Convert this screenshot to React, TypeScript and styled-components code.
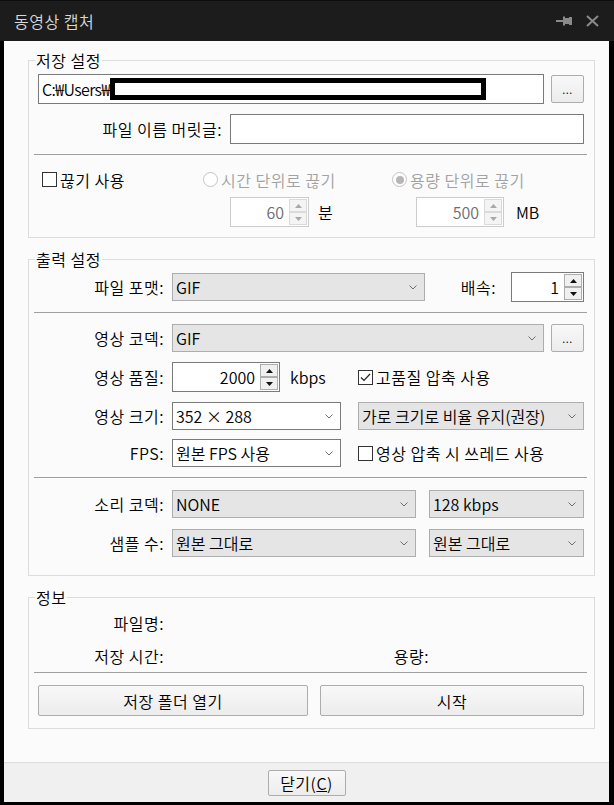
import React from 'react';
import styled, { createGlobalStyle } from 'styled-components';

const GlobalStyle = createGlobalStyle`
  html, body {
    margin: 0;
    padding: 0;
    background: #000;
  }
  * {
    box-sizing: border-box;
  }
`;

const Window = styled.div`
  width: 614px;
  height: 805px;
  display: flex;
  flex-direction: column;
  overflow: hidden;
  background: #000;
  font-family: 'Noto Sans CJK KR', 'Noto Sans', sans-serif;
  font-size: 16px;
  font-weight: 350;
  color: #000;
`;

const TitleBar = styled.div`
  height: 41px;
  flex-shrink: 0;
  display: flex;
  align-items: center;
  padding: 0 15px 0 14px;
  background: #1c1c1c;
  border-top: 1px solid #0d0d0d;
  color: #d8d8d8;
  font-size: 16px;
  letter-spacing: 0.5px;
`;

const TitleActions = styled.div`
  margin-left: auto;
  display: flex;
  align-items: center;
  gap: 14px;
`;

const Body = styled.div`
  flex: 1;
  display: flex;
  flex-direction: column;
  margin: 0 5px 3px 4px;
  background: #fbfbfb;
`;

const Content = styled.div`
  flex: 1;
  display: flex;
  flex-direction: column;
  gap: 12px;
  padding: 10px 14px 0 24px;
`;

const Group = styled.fieldset`
  margin: 0;
  padding: 0;
  min-width: 0;
  border: 1px solid #dcdcdc;
`;

const GroupTitle = styled.legend`
  margin-left: 6px;
  padding: 0 1px;
  font-size: 16px;
  line-height: 18px;
  letter-spacing: 0.5px;
`;

const GroupBody = styled.div<{ $pt: number; $pb: number }>`
  display: flex;
  flex-direction: column;
  padding: ${p => p.$pt}px 10px ${p => p.$pb}px 9px;
`;

const Row = styled.div<{ $mt?: number; $h?: number }>`
  display: flex;
  align-items: center;
  flex-shrink: 0;
  height: ${p => p.$h ?? 30}px;
  margin-top: ${p => p.$mt ?? 0}px;
`;

const Cell = styled.div<{ $w?: number; $pl?: number }>`
  display: flex;
  align-items: center;
  height: 100%;
  ${p => (p.$w ? `width: ${p.$w}px; flex-shrink: 0;` : 'flex: 1;')}
  padding-left: ${p => p.$pl ?? 0}px;
`;

const Label = styled.span<{ $w?: number }>`
  width: ${p => p.$w ?? 126}px;
  flex-shrink: 0;
  margin-right: 8px;
  text-align: right;
  white-space: nowrap;
  letter-spacing: 0.5px;
`;

const SideLabel = styled.span`
  margin-left: auto;
  margin-right: 15px;
  white-space: nowrap;
  letter-spacing: 0.5px;
`;

const Divider = styled.div<{ $mt: number }>`
  height: 1px;
  flex-shrink: 0;
  background: #a0a0a0;
  margin: ${p => p.$mt}px -3px 0 -4px;
`;

const TextBox = styled.div`
  flex: 1;
  height: 30px;
  display: flex;
  align-items: center;
  padding-left: 3px;
  border: 1px solid #7a7a7a;
  background: #fff;
  white-space: nowrap;
  overflow: hidden;
`;

const PathText = styled.span`
  letter-spacing: -0.6px;
`;

const Redacted = styled.span`
  display: inline-block;
  flex-shrink: 0;
  width: 376px;
  height: 22px;
  border: 5px solid #000;
  background: #fff;
`;

const Select = styled.div<{ $w?: number; $white?: boolean }>`
  height: 28px;
  display: flex;
  align-items: center;
  ${p => (p.$w ? `width: ${p.$w}px; flex-shrink: 0;` : 'flex: 1;')}
  padding: 0 7px 0 3px;
  border: 1px solid ${p => (p.$white ? '#7a7a7a' : '#adadad')};
  background: ${p => (p.$white ? '#fff' : '#e5e5e5')};
  white-space: nowrap;
`;

const SelectText = styled.span`
  flex: 1;
  overflow: hidden;
`;

const Spin = styled.div<{ $w: number; $disabled?: boolean }>`
  width: ${p => p.$w}px;
  height: 30px;
  flex-shrink: 0;
  display: flex;
  border: 1px solid ${p => (p.$disabled ? '#cccccc' : '#7a7a7a')};
  background: #fff;
  color: ${p => (p.$disabled ? '#6d6d6d' : '#000')};
`;

const SpinValue = styled.span`
  flex: 1;
  display: flex;
  align-items: center;
  justify-content: flex-end;
  padding-right: 5px;
`;

const SpinArrows = styled.div`
  width: 18px;
  display: flex;
  flex-direction: column;
  margin: 1px 1px 1px 0;
`;

const SpinButton = styled.div<{ $disabled?: boolean }>`
  flex: 1;
  display: flex;
  align-items: center;
  justify-content: center;
  border: 1px solid ${p => (p.$disabled ? '#dadada' : '#adadad')};
  background: ${p => (p.$disabled ? '#f4f4f4' : '#f0f0f0')};
`;

const Unit = styled.span<{ $ml: number }>`
  margin-left: ${p => p.$ml}px;
  white-space: nowrap;
`;

const Option = styled.span<{ $disabled?: boolean }>`
  display: flex;
  align-items: center;
  gap: 3px;
  white-space: nowrap;
  letter-spacing: 0.5px;
  color: ${p => (p.$disabled ? '#a2a2a2' : '#000')};
`;

const CheckBox = styled.span`
  width: 15px;
  height: 15px;
  flex-shrink: 0;
  display: inline-flex;
  align-items: center;
  justify-content: center;
  border: 1px solid #333;
  background: #fff;
`;

const Radio = styled.span<{ $checked?: boolean }>`
  width: 15px;
  height: 15px;
  flex-shrink: 0;
  display: inline-flex;
  align-items: center;
  justify-content: center;
  border: 1px solid #c4c4c4;
  border-radius: 50%;
  background: #fff;

  &::after {
    content: '';
    display: ${p => (p.$checked ? 'block' : 'none')};
    width: 8px;
    height: 8px;
    border-radius: 50%;
    background: #b6b6b6;
  }
`;

const PushButton = styled.button<{ $w?: number; $h: number; $dots?: boolean }>`
  ${p => (p.$w ? `width: ${p.$w}px; flex-shrink: 0;` : '')}
  height: ${p => p.$h}px;
  display: flex;
  align-items: ${p => (p.$dots ? 'flex-end' : 'center')};
  justify-content: center;
  padding: 0 0 ${p => (p.$dots ? 7 : 0)}px;
  margin: 0;
  border: 1px solid #adadad;
  border-radius: 2px;
  background: linear-gradient(#f8f8f8, #ececec);
  font-family: inherit;
  font-weight: inherit;
  font-size: ${p => (p.$dots ? 11 : 16)}px;
  letter-spacing: 0.5px;
  line-height: 1;
  color: #000;
`;

const InfoRow = styled.div<{ $mt: number }>`
  display: grid;
  grid-template-columns: 126px 123px 126px 1fr;
  column-gap: 8px;
  align-items: center;
  height: 26px;
  margin-top: ${p => p.$mt}px;
`;

const InfoLabel = styled.span`
  text-align: right;
  white-space: nowrap;
  letter-spacing: 0.5px;
`;

const ButtonRow = styled.div`
  display: grid;
  grid-template-columns: 270px 1fr;
  column-gap: 12px;
  height: 31px;
  margin-top: 12px;
`;

const Footer = styled.div`
  height: 40px;
  flex-shrink: 0;
  display: flex;
  align-items: center;
  justify-content: center;
  border-top: 1px solid #dcdcdc;
  background: #f0f0f0;
`;

const Chevron = () => (
  <svg width="8" height="5" viewBox="0 0 8 5">
    <polyline points="0.5,0.5 4,4 7.5,0.5" fill="none" stroke="#6e6e6e" strokeWidth="1" />
  </svg>
);

const Triangle = ({ down, color }: { down?: boolean; color: string }) => (
  <svg width="7" height="4" viewBox="0 0 7 4">
    <polygon points={down ? '0,0 7,0 3.5,4' : '0,4 7,4 3.5,0'} fill={color} />
  </svg>
);

const Dropdown = ({ value, w, white }: { value: string; w?: number; white?: boolean }) => (
  <Select $w={w} $white={white}>
    <SelectText>{value}</SelectText>
    <Chevron />
  </Select>
);

const SpinBox = ({ value, w, disabled }: { value: string; w: number; disabled?: boolean }) => {
  const c = disabled ? '#a8a8a8' : '#111';
  return (
    <Spin $w={w} $disabled={disabled}>
      <SpinValue>{value}</SpinValue>
      <SpinArrows>
        <SpinButton $disabled={disabled}>
          <Triangle color={c} />
        </SpinButton>
        <SpinButton $disabled={disabled}>
          <Triangle down color={c} />
        </SpinButton>
      </SpinArrows>
    </Spin>
  );
};

const Check = ({ checked }: { checked?: boolean }) => (
  <CheckBox>
    {checked && (
      <svg width="11" height="9" viewBox="0 0 11 9">
        <polyline points="1,4.5 4,7.5 10,1" fill="none" stroke="#222" strokeWidth="1.2" />
      </svg>
    )}
  </CheckBox>
);

const PinIcon = () => (
  <svg width="16" height="10" viewBox="0 0 16 10">
    <g fill="#8a8a8a">
      <rect x="0" y="4" width="7" height="2" />
      <rect x="7" y="0.5" width="2" height="9" />
      <rect x="9" y="2" width="5" height="6" />
      <rect x="13" y="1" width="3" height="8" />
    </g>
  </svg>
);

const CloseIcon = () => (
  <svg width="13" height="12" viewBox="0 0 13 12">
    <path d="M1 1 L12 11 M12 1 L1 11" stroke="#8a8a8a" strokeWidth="2" />
  </svg>
);

const App: React.FC = () => {
  return (
    <>
      <GlobalStyle />
      <Window>
        <TitleBar>
          <span>동영상 캡처</span>
          <TitleActions>
            <PinIcon />
            <CloseIcon />
          </TitleActions>
        </TitleBar>

        <Body>
          <Content>
            <Group>
              <GroupTitle>저장 설정</GroupTitle>
              <GroupBody $pt={5} $pb={10}>
                <Row>
                  <TextBox>
                    <PathText>C:₩Users₩</PathText>
                    <Redacted />
                  </TextBox>
                  <PushButton $w={33} $h={28} $dots style={{ marginLeft: 7 }}>
                    ...
                  </PushButton>
                </Row>
                <Row $mt={10}>
                  <Label $w={184}>파일 이름 머릿글:</Label>
                  <TextBox />
                </Row>
                <Divider $mt={10} />
                <Row $mt={11} $h={27}>
                  <Cell $w={151} $pl={4}>
                    <Option>
                      <Check />
                      끊기 사용
                    </Option>
                  </Cell>
                  <Cell $w={196} $pl={14}>
                    <Option $disabled>
                      <Radio />
                      시간 단위로 끊기
                    </Option>
                  </Cell>
                  <Cell $pl={7}>
                    <Option $disabled>
                      <Radio $checked />
                      용량 단위로 끊기
                    </Option>
                  </Cell>
                </Row>
                <Row $mt={4}>
                  <Cell $w={151} />
                  <Cell $w={196} $pl={41}>
                    <SpinBox value="60" w={79} disabled />
                    <Unit $ml={9}>분</Unit>
                  </Cell>
                  <Cell $pl={31}>
                    <SpinBox value="500" w={88} disabled />
                    <Unit $ml={12}>MB</Unit>
                  </Cell>
                </Row>
              </GroupBody>
            </Group>

            <Group>
              <GroupTitle>출력 설정</GroupTitle>
              <GroupBody $pt={4} $pb={17}>
                <Row>
                  <Label>파일 포맷:</Label>
                  <Dropdown value="GIF" w={253} />
                  <SideLabel>배속:</SideLabel>
                  <SpinBox value="1" w={73} />
                </Row>
                <Divider $mt={10} />
                <Row $mt={10}>
                  <Label>영상 코덱:</Label>
                  <Dropdown value="GIF" />
                  <PushButton $w={33} $h={28} $dots style={{ marginLeft: 7 }}>
                    ...
                  </PushButton>
                </Row>
                <Row $mt={9}>
                  <Label>영상 품질:</Label>
                  <Cell $w={169}>
                    <SpinBox value="2000" w={108} />
                    <Unit $ml={10}>kbps</Unit>
                  </Cell>
                  <Cell $pl={17}>
                    <Option>
                      <Check checked />
                      고품질 압축 사용
                    </Option>
                  </Cell>
                </Row>
                <Row $mt={9}>
                  <Label>영상 크기:</Label>
                  <Dropdown value="352 × 288" w={169} white />
                  <Cell $pl={17}>
                    <Dropdown value="가로 크기로 비율 유지(권장)" />
                  </Cell>
                </Row>
                <Row $mt={7}>
                  <Label>FPS:</Label>
                  <Dropdown value="원본 FPS 사용" w={169} white />
                  <Cell $pl={17}>
                    <Option>
                      <Check />
                      영상 압축 시 쓰레드 사용
                    </Option>
                  </Cell>
                </Row>
                <Divider $mt={9} />
                <Row $mt={11}>
                  <Label>소리 코덱:</Label>
                  <Dropdown value="NONE" w={244} />
                  <Cell $pl={13}>
                    <Dropdown value="128 kbps" />
                  </Cell>
                </Row>
                <Row $mt={9}>
                  <Label>샘플 수:</Label>
                  <Dropdown value="원본 그대로" w={244} />
                  <Cell $pl={13}>
                    <Dropdown value="원본 그대로" />
                  </Cell>
                </Row>
              </GroupBody>
            </Group>

            <Group>
              <GroupTitle>정보</GroupTitle>
              <GroupBody $pt={4} $pb={12}>
                <InfoRow $mt={0}>
                  <InfoLabel>파일명:</InfoLabel>
                </InfoRow>
                <InfoRow $mt={7}>
                  <InfoLabel>저장 시간:</InfoLabel>
                  <span />
                  <InfoLabel>용량:</InfoLabel>
                  <span />
                </InfoRow>
                <Divider $mt={3} />
                <ButtonRow>
                  <PushButton $h={31}>저장 폴더 열기</PushButton>
                  <PushButton $h={31}>시작</PushButton>
                </ButtonRow>
              </GroupBody>
            </Group>
          </Content>

          <Footer>
            <PushButton $w={78} $h={26}>
              닫기(<u>C</u>)
            </PushButton>
          </Footer>
        </Body>
      </Window>
    </>
  );
};

export default App;
